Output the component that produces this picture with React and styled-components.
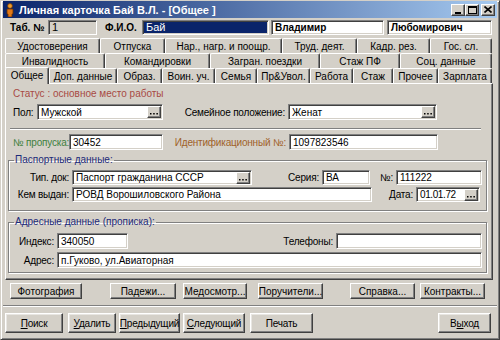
import React from 'react';
import styled, { createGlobalStyle } from 'styled-components';

const Global = createGlobalStyle`
  html, body { margin: 0; padding: 0; background: #d4d0c8; }
  body { font-family: "Liberation Sans", Arial, sans-serif; font-size: 10px; color: #000; }
  * { box-sizing: border-box; }
`;

const Window = styled.div`
  width: 500px;
  height: 340px;
  background: #d4d0c8;
  display: flex;
  flex-direction: column;
  border: 1px solid;
  border-color: #d4d0c8 #404040 #404040 #d4d0c8;
  box-shadow: inset 1px 1px #fff, inset -1px -1px #808080;
  padding: 0 2px 2px 2px;
  overflow: hidden;
`;

const TitleBar = styled.div`
  height: 17px;
  display: flex;
  align-items: center;
  background: linear-gradient(to right, #0a246a, #a6caf0);
  padding: 0 2px 0 2px;
  color: #fff;
  font-weight: bold;
  font-size: 11px;
`;

const TitleText = styled.span`
  margin-left: 4px;
  flex: 1;
  white-space: nowrap;
`;

const CapBtn = styled.div`
  width: 14px;
  height: 12px;
  background: #d4d0c8;
  border: 1px solid;
  border-color: #fff #404040 #404040 #fff;
  box-shadow: inset -1px -1px #808080;
  margin-left: ${p => p.$ml || 0}px;
  display: flex;
  align-items: center;
  justify-content: center;
  color: #000;
`;

const HeaderRow = styled.div`
  height: 16px;
  margin-top: 1px;
  display: flex;
  align-items: center;
`;

const HeadLabel = styled.span`
  font-weight: bold;
  font-size: 10px;
  margin-left: ${p => p.$ml || 0}px;
  width: ${p => p.$w}px;
`;

const Field = styled.div`
  width: ${p => p.$w}px;
  height: ${p => p.$h || 16}px;
  margin-left: ${p => p.$ml || 0}px;
  flex: none;
  background: ${p => p.$bg || '#fff'};
  color: ${p => p.$fg || '#000'};
  font-weight: ${p => (p.$bold ? 'bold' : 'normal')};
  border: 1px solid;
  border-color: #808080 #fff #fff #808080;
  box-shadow: inset 1px 1px #404040, inset -1px -1px #d4d0c8;
  padding: 0 1px 0 3px;
  display: flex;
  align-items: center;
  justify-content: space-between;
  white-space: nowrap;
  overflow: hidden;
  font-size: ${p => (p.$big ? 11 : 10)}px;
  letter-spacing: ${p => (p.$tight ? '-0.4px' : '0')};
`;

const DotsBox = styled.div`
  width: 14px;
  height: 12px;
  flex: none;
  background: #d4d0c8;
  border: 1px solid;
  border-color: #fff #404040 #404040 #fff;
  box-shadow: inset -1px -1px #808080;
  display: flex;
  align-items: center;
  justify-content: center;
`;

const Dots = () => (
  <DotsBox>
    <svg width="8" height="8" viewBox="0 0 8 8">
      <rect x="0" y="5" width="1.5" height="1.5" fill="#000" />
      <rect x="3.2" y="5" width="1.5" height="1.5" fill="#000" />
      <rect x="6.4" y="5" width="1.5" height="1.5" fill="#000" />
    </svg>
  </DotsBox>
);

const TabArea = styled.div`
  margin-top: 3px;
  margin-left: 2px;
  display: flex;
  flex-direction: column;
`;

const TabRow = styled.div`
  display: flex;
  height: 15px;
  align-items: flex-end;
`;

const Tab = styled.div`
  width: ${p => p.$w}px;
  height: ${p => (p.$active ? 17 : 15)}px;
  margin-bottom: ${p => (p.$active ? -1 : 0)}px;
  position: relative;
  z-index: ${p => (p.$active ? 2 : 1)};
  background: #d4d0c8;
  border-top: 1px solid #fff;
  border-left: 1px solid #fff;
  border-right: 1px solid #404040;
  box-shadow: inset -1px 0 #808080;
  border-radius: 2px 2px 0 0;
  display: flex;
  align-items: center;
  justify-content: center;
  white-space: nowrap;
  padding-bottom: ${p => (p.$active ? 2 : 0)}px;
`;

const Panel = styled.div`
  width: 488px;
  height: 197px;
  border: 1px solid;
  border-color: #fff #404040 #404040 #fff;
  box-shadow: inset -1px -1px #808080;
  display: flex;
  flex-direction: column;
`;

const Status = styled.div`
  margin-top: 4px;
  height: 12px;
  line-height: 12px;
  padding-left: 7px;
  color: #a84a44;
`;

const Row = styled.div`
  display: flex;
  align-items: center;
  margin-top: ${p => p.$mt || 0}px;
  padding-left: ${p => p.$pl || 0}px;
  height: ${p => p.$h || 16}px;
`;

const Label = styled.span`
  width: ${p => p.$w}px;
  flex: none;
  text-align: ${p => p.$align || 'left'};
  padding-right: ${p => (p.$align === 'right' ? 3 : 0)}px;
  color: ${p => p.$color || '#000'};
  white-space: nowrap;
  letter-spacing: -0.2px;
`;

const Etched = styled.div`
  height: 2px;
  margin-top: ${p => p.$mt || 0}px;
  margin-left: ${p => p.$ml || 0}px;
  width: ${p => (p.$w ? `${p.$w}px` : 'auto')};
  border-top: 1px solid #808080;
  border-bottom: 1px solid #fff;
`;

const Group = styled.fieldset`
  margin: ${p => p.$mt}px 0 0 2px;
  width: 479px;
  height: ${p => p.$h}px;
  padding: 0;
  border: 1px solid #808080;
  box-shadow: 1px 1px 0 #fff, inset 1px 1px 0 #fff;
  min-width: 0;
`;

const Legend = styled.legend`
  margin-left: 5px;
  padding: 0 1px;
  color: #1c2a78;
  line-height: 12px;
  height: 12px;
`;

const ButtonRow = styled.div`
  display: flex;
  height: ${p => p.$h}px;
  margin-top: ${p => p.$mt}px;
`;

const Button = styled.div`
  width: ${p => p.$w}px;
  margin-left: ${p => p.$ml || 0}px;
  height: 100%;
  flex: none;
  background: #d4d0c8;
  border: 1px solid;
  border-color: #fff #404040 #404040 #fff;
  box-shadow: inset -1px -1px #808080 ${p => (p.$thick ? ', inset 1px 1px #e8e6e2' : '')};
  display: flex;
  align-items: center;
  justify-content: center;
  white-space: nowrap;
  font-size: 10px;
  letter-spacing: ${p => (p.$thick ? '-0.2px' : '0')};
  u { text-decoration: underline; }
`;

const PersonIcon = () => (
  <svg width="10" height="14" viewBox="0 0 10 14">
    <circle cx="5" cy="3" r="2.4" fill="#f0a030" stroke="#7a3a00" strokeWidth="0.8" />
    <path d="M2 6 h6 v5 h-1 v3 h-4 v-3 h-1 z" fill="#e07818" stroke="#6a3000" strokeWidth="0.8" />
  </svg>
);

const row1 = [
  ['Удостоверения', 95], ['Отпуска', 65], ['Нар., нагр. и поощр.', 117],
  ['Труд. деят.', 75], ['Кадр. рез.', 73], ['Гос. сл.', 62],
];
const row2 = [
  ['Инвалидность', 100], ['Командировки', 105], ['Загран. поездки', 110],
  ['Стаж ПФ', 80], ['Соц. данные', 92],
];
const row3 = [
  ['Общее', 44], ['Доп. данные', 68], ['Образ.', 45], ['Воин. уч.', 53],
  ['Семья', 42], ['Пр&Увол.', 53], ['Работа', 43], ['Стаж', 40],
  ['Прочее', 45], ['Зарплата', 54],
];

export default function App() {
  return (
    <>
      <Global />
      <Window>
        <TitleBar>
          <PersonIcon />
          <TitleText>Личная карточка Бай В.Л. - [Общее ]</TitleText>
          <CapBtn>
            <svg width="8" height="8" viewBox="0 0 8 8"><rect x="1" y="6" width="6" height="2" fill="#000" /></svg>
          </CapBtn>
          <CapBtn>
            <svg width="9" height="8" viewBox="0 0 9 8"><rect x="0.5" y="0.5" width="8" height="7" fill="none" stroke="#000" /><rect x="0.5" y="0.5" width="8" height="1.5" fill="#000" /></svg>
          </CapBtn>
          <CapBtn $ml={2}>
            <svg width="8" height="7" viewBox="0 0 8 7"><path d="M0.5 0.5 L7.5 6.5 M7.5 0.5 L0.5 6.5" stroke="#000" strokeWidth="1.6" /></svg>
          </CapBtn>
        </TitleBar>

        <HeaderRow>
          <HeadLabel $ml={7} $w={38}>Таб. №</HeadLabel>
          <Field $w={49} $h={15} $bg="#d4d0c8" $big>1</Field>
          <HeadLabel $ml={8} $w={37}>Ф.И.О.</HeadLabel>
          <Field $w={127} $h={15} $bg="#0a246a" $fg="#fff" $big>Бай</Field>
          <Field $w={113} $h={15} $ml={2} $bold>Владимир</Field>
          <Field $w={105} $h={15} $ml={3} $bold>Любомирович</Field>
        </HeaderRow>

        <TabArea>
          <TabRow>{row1.map(([t, w]) => <Tab key={t} $w={w}>{t}</Tab>)}</TabRow>
          <TabRow>{row2.map(([t, w]) => <Tab key={t} $w={w}>{t}</Tab>)}</TabRow>
          <TabRow>
            {row3.map(([t, w], i) => <Tab key={t} $w={w} $active={i === 0}>{t}</Tab>)}
          </TabRow>
          <Panel>
            <Status>Статус : основное место работы</Status>
            <Row $mt={4} $pl={7}>
              <Label $w={24}>Пол:</Label>
              <Field $w={126}>Мужской<Dots /></Field>
              <Label $w={125} $align="right">Семейное положение:</Label>
              <Field $w={149}>Женат<Dots /></Field>
            </Row>
            <Etched $mt={8} $ml={4} $w={471} />
            <Row $mt={4} $pl={7}>
              <Label $w={56} $color="#3d7f3d">№ пропуска:</Label>
              <Field $w={94}>30452</Field>
              <Label $w={126} $align="right" $color="#a0622a">Идентификационный №:</Label>
              <Field $w={149}>1097823546</Field>
            </Row>

            <Group $mt={4} $h={57}>
              <Legend>Паспортные данные:</Legend>
              <Row $mt={4} $h={15}>
                <Label $w={63} $align="right">Тип. док:</Label>
                <Field $w={180} $h={15}>Паспорт гражданина СССР<Dots /></Field>
                <Label $w={70} $align="right">Серия:</Label>
                <Field $w={48} $h={15}>ВА</Field>
                <Label $w={26} $align="right">№:</Label>
                <Field $w={86} $h={15}>111222</Field>
              </Row>
              <Row $mt={2} $h={15}>
                <Label $w={63} $align="right">Кем выдан:</Label>
                <Field $w={300} $h={15}>РОВД Ворошиловского Района</Field>
                <Label $w={44} $align="right">Дата:</Label>
                <Field $w={64} $h={15} $tight>01.01.72<Dots /></Field>
              </Row>
            </Group>

            <Group $mt={5} $h={57}>
              <Legend>Адресные данные (прописка):</Legend>
              <Row $mt={5} $h={16}>
                <Label $w={48} $align="right">Индекс:</Label>
                <Field $w={71}>340050</Field>
                <Label $w={208} $align="right">Телефоны:</Label>
                <Field $w={146}></Field>
              </Row>
              <Row $mt={3} $h={16}>
                <Label $w={48} $align="right">Адрес:</Label>
                <Field $w={425}>п.Гуково, ул.Авиаторная</Field>
              </Row>
            </Group>
          </Panel>
        </TabArea>

        <ButtonRow $h={16} $mt={3}>
          <Button $w={72} $ml={7}>Фотография</Button>
          <Button $w={66} $ml={28}>Падежи...</Button>
          <Button $w={64} $ml={7}>Медосмотр...</Button>
          <Button $w={65} $ml={11}>Поручители...</Button>
          <Button $w={65} $ml={27}>Справка...</Button>
          <Button $w={65} $ml={5}>Контракты...</Button>
        </ButtonRow>

        <Etched $mt={6} />

        <ButtonRow $h={20} $mt={6}>
          <Button $thick $w={58} $ml={2}><span><u>П</u>оиск</span></Button>
          <Button $thick $w={48} $ml={5}><span><u>У</u>далить</span></Button>
          <Button $thick $w={61} $ml={3}><span><u>П</u>редыдущий</span></Button>
          <Button $thick $w={62} $ml={3}><span><u>С</u>ледующий</span></Button>
          <Button $thick $w={63} $ml={5}>Печать</Button>
          <Button $thick $w={53} $ml={125}><span>В<u>ы</u>ход</span></Button>
        </ButtonRow>
      </Window>
    </>
  );
}
